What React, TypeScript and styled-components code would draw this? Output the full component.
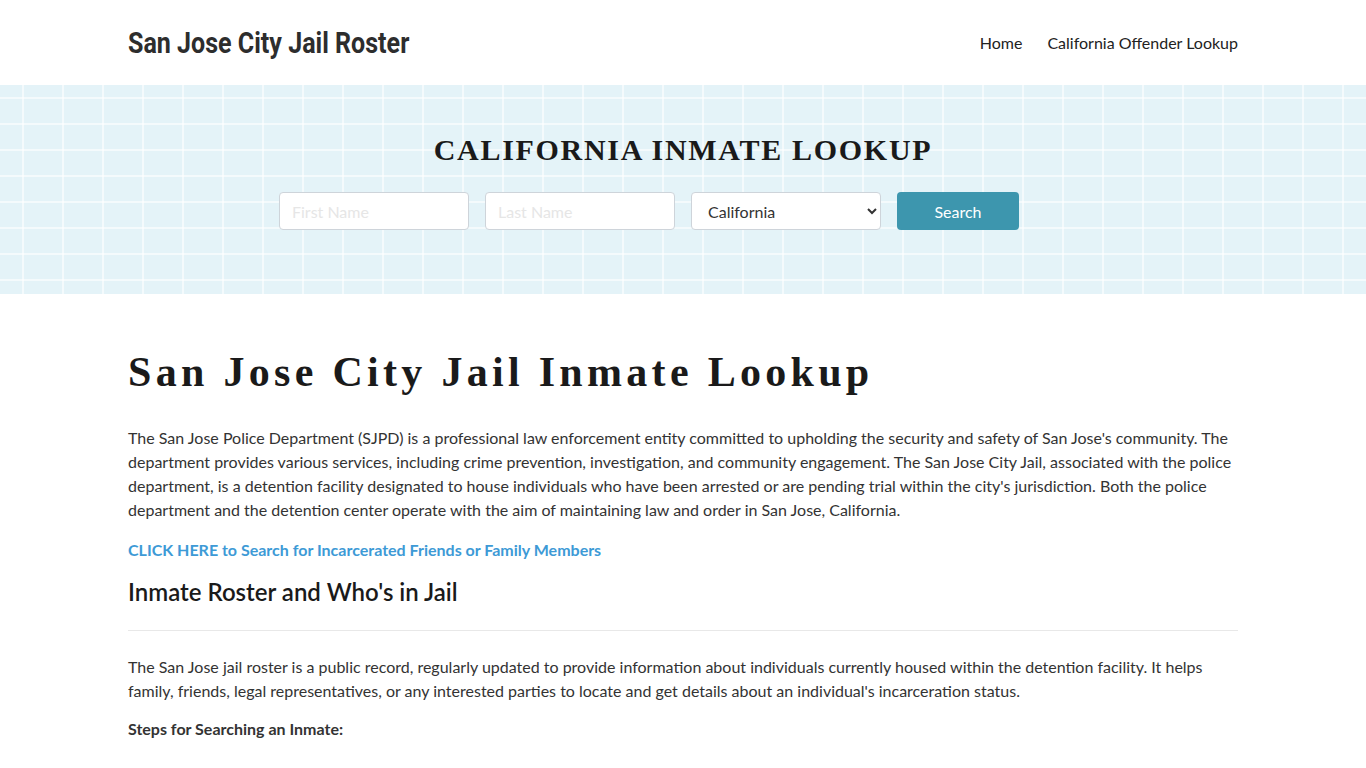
import React from 'react'
import styled, { createGlobalStyle } from 'styled-components'

const GlobalStyle = createGlobalStyle`
  body {
    margin: 0;
    font-family: Lato, 'Open Sans', sans-serif;
    color: #333;
    background: #fff;
  }
  * { box-sizing: border-box; }
`

const Wrap = styled.div`
  width: 1110px;
  margin: 0 auto;
`

const Header = styled.header`
  height: 85px;
  background: #fff;
`

const HeaderInner = styled(Wrap)`
  height: 100%;
  display: flex;
  align-items: center;
  justify-content: space-between;
`

// the logo face is a condensed grotesk; squeeze Roboto to match
const Brand = styled.a`
  display: inline-block;
  font-family: Roboto, sans-serif;
  font-weight: 700;
  font-size: 30px;
  color: #2d2d2d;
  text-decoration: none;
  transform: scaleX(0.835);
  transform-origin: left center;
  white-space: nowrap;
`

const Nav = styled.nav`
  display: flex;
  gap: 25px;
`

const NavLink = styled.a`
  font-size: 16px;
  color: #222;
  text-decoration: none;
`

const Banner = styled.section`
  height: 209px;
  background-color: #e4f3f8;
  background-image:
    repeating-linear-gradient(90deg, transparent 0 22px, rgba(255, 255, 255, 0.6) 22px 24px, transparent 24px 40px),
    repeating-linear-gradient(180deg, transparent 0 12px, rgba(255, 255, 255, 0.6) 12px 14px, transparent 14px 26px);
  display: flex;
  flex-direction: column;
  align-items: center;
  padding-top: 47px;
`

const BannerTitle = styled.h2`
  margin: 0;
  font-family: 'Liberation Serif', serif;
  font-weight: 700;
  font-size: 30px;
  letter-spacing: 1.7px;
  color: #1a1a1a;
  line-height: 36px;
`

const SearchForm = styled.form`
  display: flex;
  gap: 16px;
  margin-top: 24px;
  margin-right: 68px;
`

const Field = styled.input`
  width: 190px;
  height: 38px;
  border: 1px solid #ced4da;
  border-radius: 4px;
  background: #fff;
  padding: 0 12px;
  font-family: Lato, sans-serif;
  font-size: 16px;
  &::placeholder { color: #e6e6e6; }
`

const Select = styled.select`
  width: 190px;
  height: 38px;
  border: 1px solid #ced4da;
  border-radius: 4px;
  background: #fff;
  padding: 0 12px;
  font-family: Lato, sans-serif;
  font-size: 16px;
  color: #333;
`

const SearchButton = styled.button`
  width: 122px;
  height: 38px;
  border: none;
  border-radius: 4px;
  background: #3d96ae;
  color: #fff;
  font-family: Lato, sans-serif;
  font-size: 16px;
`

const Main = styled(Wrap)`
  padding-top: 50px;
`

const Title = styled.h1`
  margin: 0 0 26px;
  font-family: 'Liberation Serif', serif;
  font-weight: 700;
  font-size: 42px;
  letter-spacing: 4.3px;
  line-height: 56px;
  color: #1a1a1a;
`

const Para = styled.p<{ $gap?: number }>`
  margin: 0 0 ${(p) => p.$gap ?? 16}px;
  font-size: 16px;
  line-height: 24px;
  color: #333;
`

const Lead = styled.a`
  display: block;
  font-size: 16px;
  font-weight: 700;
  line-height: 24px;
  color: #3d9ad6;
  text-decoration: none;
  margin-bottom: 15px;
`

const SubTitle = styled.h3`
  margin: 0;
  font-size: 24px;
  font-weight: 600;
  line-height: 30px;
  color: #1a1a1a;
`

const Rule = styled.hr`
  border: none;
  border-top: 1px solid #e8e8e8;
  margin: 23px 0 24px;
`

const Steps = styled.p`
  margin: 0;
  font-size: 16px;
  font-weight: 700;
  line-height: 24px;
  color: #333;
`

export default function App() {
  return (
    <>
      <GlobalStyle />
      <Header>
        <HeaderInner>
          <Brand href="#">San Jose City Jail Roster</Brand>
          <Nav>
            <NavLink href="#">Home</NavLink>
            <NavLink href="#">California Offender Lookup</NavLink>
          </Nav>
        </HeaderInner>
      </Header>
      <Banner>
        <BannerTitle>CALIFORNIA INMATE LOOKUP</BannerTitle>
        <SearchForm onSubmit={(e) => e.preventDefault()}>
          <Field placeholder="First Name" />
          <Field placeholder="Last Name" />
          <Select defaultValue="California">
            <option>California</option>
          </Select>
          <SearchButton type="submit">Search</SearchButton>
        </SearchForm>
      </Banner>
      <Main>
        <Title>San Jose City Jail Inmate Lookup</Title>
        <Para>
          The San Jose Police Department (SJPD) is a professional law enforcement entity committed to upholding the
          security and safety of San Jose's community. The department provides various services, including crime
          prevention, investigation, and community engagement. The San Jose City Jail, associated with the police
          department, is a detention facility designated to house individuals who have been arrested or are pending
          trial within the city's jurisdiction. Both the police department and the detention center operate with the
          aim of maintaining law and order in San Jose, California.
        </Para>
        <Lead href="#">CLICK HERE to Search for Incarcerated Friends or Family Members</Lead>
        <SubTitle>Inmate Roster and Who's in Jail</SubTitle>
        <Rule />
        <Para $gap={14}>
          The San Jose jail roster is a public record, regularly updated to provide information about individuals
          currently housed within the detention facility. It helps family, friends, legal representatives, or any
          interested parties to locate and get details about an individual's incarceration status.
        </Para>
        <Steps>Steps for Searching an Inmate:</Steps>
      </Main>
    </>
  )
}
